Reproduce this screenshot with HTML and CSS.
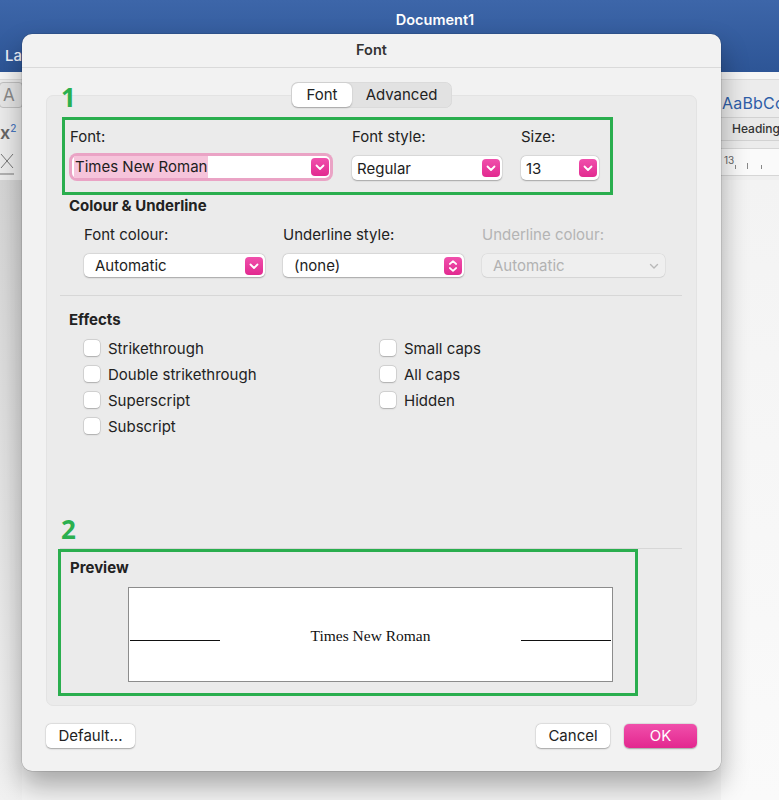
FILE: index.html
```html
<!DOCTYPE html>
<html>
<head>
<meta charset="utf-8">
<title>Font</title>
<link rel="stylesheet" href="styles.css">
</head>
<body>
<div class="word">
  <div class="titlebar">
    <div class="doc-title">Document1</div>
    <div class="tabs-row"><span class="ribbon-tab">La</span></div>
  </div>
  <div class="ribbon">
    <div class="rib-left">
      <div class="rib-btns"><span class="rb rb1"></span><span class="rb rb2">A</span></div>
      <div class="rib-sup">x<sup>2</sup></div>
    </div>
    <div class="rib-right">
      <div class="style-sample">AaBbCc</div>
      <div class="style-name">Heading</div>
    </div>
  </div>
  <div class="ruler-row">
    <div class="ruler-left">
      <svg width="16" height="28" viewBox="0 0 16 28"><path d="M1 4 L13 18 M13 4 L1 18 M0 24 H14" stroke="#777" stroke-width="1" fill="none"/></svg>
    </div>
    <div class="ruler-right"><span class="ruler-num">13</span><span class="tick t1"></span><span class="tick t2"></span><span class="tick t3"></span></div>
  </div>
  <div class="doc-area">
    <div class="doc-left"></div>
    <div class="doc-right"></div>
  </div>
</div>

<div class="dialog">
  <div class="dlg-title">Font</div>
  <div class="dlg-body">
    <div class="panel">
      <div class="tabs">
        <div class="tab sel">Font</div>
        <div class="tab">Advanced</div>
      </div>
      <div class="annot a1">1</div>
      <div class="annot a2">2</div>

      <div class="green box1">
        <div class="font-row">
          <div class="col col-font">
            <div class="lbl">Font:</div>
            <div class="select focus">
              <span class="sel-text"><span class="hl">Times New Roman</span></span>
              <span class="arrow"><svg width="18" height="18" viewBox="0 0 18 18"><polyline points="5.5,7.5 9,11 12.5,7.5" fill="none" stroke="#fff" stroke-width="1.8" stroke-linecap="round" stroke-linejoin="round"/></svg></span>
            </div>
          </div>
          <div class="col col-style">
            <div class="lbl">Font style:</div>
            <div class="select">
              <span class="sel-text">Regular</span>
              <span class="arrow"><svg width="18" height="18" viewBox="0 0 18 18"><polyline points="5.5,7.5 9,11 12.5,7.5" fill="none" stroke="#fff" stroke-width="1.8" stroke-linecap="round" stroke-linejoin="round"/></svg></span>
            </div>
          </div>
          <div class="col col-size">
            <div class="lbl">Size:</div>
            <div class="select">
              <span class="sel-text">13</span>
              <span class="arrow"><svg width="18" height="18" viewBox="0 0 18 18"><polyline points="5.5,7.5 9,11 12.5,7.5" fill="none" stroke="#fff" stroke-width="1.8" stroke-linecap="round" stroke-linejoin="round"/></svg></span>
            </div>
          </div>
        </div>
      </div>

      <div class="sec-title">Colour &amp; Underline</div>
      <div class="cu-row">
        <div class="cu-col">
          <div class="lbl">Font colour:</div>
          <div class="select wide">
            <span class="sel-text">Automatic</span>
            <span class="arrow"><svg width="18" height="18" viewBox="0 0 18 18"><polyline points="5.5,7.5 9,11 12.5,7.5" fill="none" stroke="#fff" stroke-width="1.8" stroke-linecap="round" stroke-linejoin="round"/></svg></span>
          </div>
        </div>
        <div class="cu-col">
          <div class="lbl">Underline style:</div>
          <div class="select wide">
            <span class="sel-text">(none)</span>
            <span class="arrow"><svg width="18" height="18" viewBox="0 0 18 18"><polyline points="5.8,7 9,4.2 12.2,7" fill="none" stroke="#fff" stroke-width="1.7" stroke-linecap="round" stroke-linejoin="round"/><polyline points="5.8,11 9,13.8 12.2,11" fill="none" stroke="#fff" stroke-width="1.7" stroke-linecap="round" stroke-linejoin="round"/></svg></span>
          </div>
        </div>
        <div class="cu-col last">
          <div class="lbl disabled">Underline colour:</div>
          <div class="select wide dis">
            <span class="sel-text">Automatic</span>
            <span class="chev"><svg width="14" height="14" viewBox="0 0 14 14"><polyline points="3.5,5.5 7,9 10.5,5.5" fill="none" stroke="#b8b8b8" stroke-width="1.4" stroke-linecap="round" stroke-linejoin="round"/></svg></span>
          </div>
        </div>
      </div>

      <div class="sep sep1"></div>

      <div class="sec-title effects-title">Effects</div>
      <div class="effects">
        <div class="fx-col">
          <label class="cb"><span class="box"></span>Strikethrough</label>
          <label class="cb"><span class="box"></span>Double strikethrough</label>
          <label class="cb"><span class="box"></span>Superscript</label>
          <label class="cb"><span class="box"></span>Subscript</label>
        </div>
        <div class="fx-col">
          <label class="cb"><span class="box"></span>Small caps</label>
          <label class="cb"><span class="box"></span>All caps</label>
          <label class="cb"><span class="box"></span>Hidden</label>
        </div>
      </div>

      <div class="sep sep2"></div>

      <div class="green box2">
        <div class="sec-title preview-title">Preview</div>
        <div class="preview">
          <span class="pline"></span>
          <span class="ptext">Times New Roman</span>
          <span class="pline"></span>
        </div>
      </div>
    </div>

    <div class="buttons">
      <div class="btn default">Default...</div>
      <div class="btn-group">
        <div class="btn cancel">Cancel</div>
        <div class="btn ok">OK</div>
      </div>
    </div>
  </div>
</div>
</body>
</html>
```

FILE: styles.css
```css
* { box-sizing: border-box; }

html, body {
  margin: 0;
  padding: 0;
}

body {
  width: 779px;
  height: 800px;
  overflow: hidden;
  position: relative;
  font-family: Inter, "Liberation Sans", sans-serif;
  font-size: 15px;
  color: #222;
  background: #f4f4f4;
}

/* ---------- Word background ---------- */
.word {
  height: 800px;
  display: flex;
  flex-direction: column;
}

.titlebar {
  height: 72px;
  background: linear-gradient(#3d66a9, #2d5596);
}

.doc-title {
  height: 40px;
  line-height: 40px;
  padding-left: 91px;
  text-align: center;
  color: #fff;
  font-weight: 600;
  font-size: 14.5px;
}

.tabs-row {
  height: 32px;
  line-height: 32px;
  padding-left: 5px;
}

.ribbon-tab {
  color: #eef2fa;
  font-size: 15px;
  font-weight: 500;
}

.ribbon {
  height: 76px;
  display: flex;
  justify-content: space-between;
  background: linear-gradient(#f6f6f6 0, #f6f6f6 7px, #dcdcdc 7px, #dcdcdc 8px, #ececec 8px);
}

.rib-left {
  width: 22px;
  overflow: hidden;
  padding-top: 10px;
}

.rib-btns {
  display: flex;
  gap: 6px;
  margin-left: -12px;
}

.rb {
  height: 26px;
  border: 1px solid #c2c2c2;
  border-radius: 4px;
  background: #e6e6e6;
  color: #8a8a8a;
  font-size: 17px;
  line-height: 24px;
  padding-left: 3px;
}

.rb1 { width: 15px; }
.rb2 { width: 24px; flex: none; }

.rib-sup {
  margin-top: 10px;
  font-size: 18px;
  font-weight: 600;
  color: #666;
  line-height: 20px;
}

.rib-sup sup {
  font-size: 10px;
  color: #4a78c0;
  font-weight: 500;
}

.rib-right {
  width: 58px;
  padding-top: 21px;
  overflow: hidden;
}

.style-sample {
  font-size: 16px;
  color: #2f5ea8;
  line-height: 20px;
  padding-left: 1px;
  white-space: nowrap;
  letter-spacing: 0.2px;
}

.style-name {
  margin-top: 4px;
  height: 24px;
  line-height: 22px;
  background: #e9e9e9;
  border-top: 1px solid #d2d2d2;
  border-bottom: 1px solid #d2d2d2;
  font-size: 12px;
  font-weight: 500;
  color: #333;
  padding-left: 11px;
  white-space: nowrap;
}

.ruler-row {
  height: 32px;
  display: flex;
  justify-content: space-between;
  background: #efefef;
}

.ruler-left {
  width: 22px;
  padding-top: 2px;
  background: #ececec;
}

.ruler-right {
  width: 58px;
  position: relative;
  background: #fafafa;
  border-top: 1px solid #d6d6d6;
  border-bottom: 1px solid #d6d6d6;
  margin: 0 0 4px;
  font-size: 10px;
  color: #666;
  padding: 5px 0 0 3px;
}

.tick {
  position: absolute;
  bottom: 6px;
  width: 1px;
  height: 4px;
  background: #888;
}
.t1 { left: 14px; }
.t2 { left: 26px; height: 6px; }
.t3 { left: 40px; }

.doc-area {
  flex: 1;
  display: flex;
  justify-content: space-between;
}

.doc-left {
  width: 22px;
  background: linear-gradient(#d6d6d6, #e6e6e6 60%, #f1f1f1);
}

.doc-right {
  width: 58px;
  background: linear-gradient(#f3f3f3, #fafafa);
}

/* ---------- Dialog ---------- */
.dialog {
  position: absolute;
  left: 22px;
  top: 34px;
  width: 699px;
  height: 737px;
  background: #f2f2f2;
  border-radius: 10px;
  box-shadow: 0 14px 28px rgba(0, 0, 0, 0.33), 0 0 0 0.5px rgba(0, 0, 0, 0.18);
}

.dlg-title {
  height: 34px;
  line-height: 32px;
  text-align: center;
  font-weight: 600;
  font-size: 14.5px;
  color: #333;
  border-bottom: 1px solid #dadada;
}

.dlg-body {
  padding: 27px 24px 0;
}

.panel {
  position: relative;
  height: 611px;
  background: #ebebeb;
  border: 1px solid #e3e3e3;
  border-radius: 7px;
}

.tabs {
  display: flex;
  width: 161px;
  height: 26px;
  margin: -14px auto 0;
  padding: 1px;
  background: #e2e2e2;
  border-radius: 7px;
  box-shadow: inset 0 0 0 0.5px rgba(0, 0, 0, 0.06);
}

.tab {
  height: 24px;
  line-height: 24px;
  text-align: center;
  font-size: 15px;
  color: #222;
}

.tab:first-child { width: 60px; }
.tab:last-child { width: 99px; }

.tab.sel {
  background: #fff;
  border-radius: 6px;
  box-shadow: 0 0.5px 1.5px rgba(0, 0, 0, 0.25);
}

.annot {
  position: absolute;
  font-family: "Open Sans", sans-serif;
  font-weight: 700;
  font-size: 26px;
  line-height: 26px;
  color: #2bb04f;
}

.a1 { left: 14px; top: -12px; }
.a2 { left: 14px; top: 420px; }

.green {
  border: 3px solid #2aae4e;
}

.box1 {
  width: 551px;
  height: 78px;
  margin: 9px 0 0 15px;
  padding: 9px 0 0 5px;
}

.font-row {
  display: flex;
}

.col-font { width: 263px; margin-right: 19px; }
.col-style { width: 150px; margin-right: 19px; }
.col-size { width: 78px; }

.lbl {
  font-size: 15px;
  line-height: 16px;
  color: #222;
  margin-bottom: 11px;
  white-space: nowrap;
}

.lbl.disabled { color: #b4b4b4; }

.select {
  display: flex;
  align-items: center;
  justify-content: space-between;
  height: 24px;
  background: #fff;
  border-radius: 5px;
  box-shadow: 0 0.5px 1.5px rgba(0, 0, 0, 0.28), 0 0 0 0.5px rgba(0, 0, 0, 0.06);
  padding: 0 2px 0 5px;
  font-size: 15px;
  color: #1d1d1d;
}

.select.focus {
  width: 258px;
  height: 22px;
  margin-left: 2px;
  padding-left: 2px;
  padding-right: 1px;
  box-shadow: 0 0 0 3px #eaa3c5;
}

.hl {
  display: inline-block;
  background: #f6c4db;
  line-height: 22px;
  padding: 0 1px;
}

.arrow {
  width: 18px;
  height: 18px;
  border-radius: 4px;
  background: linear-gradient(#f050ac, #e22a90);
  display: flex;
}

.sec-title {
  font-weight: 700;
  font-size: 15px;
  line-height: 16px;
  color: #222;
  margin: 3px 0 0 22px;
}

.cu-row {
  display: flex;
  margin: 13px 0 0 37px;
}

.cu-col { width: 181px; margin-right: 18px; }
.cu-col.last { width: 183px; margin-right: 0; }

.select.wide {
  height: 23px;
  padding-left: 11px;
}

.select.dis {
  background: #efefef;
  color: #b2b2b2;
  box-shadow: 0 0 0 0.5px rgba(0, 0, 0, 0.08), 0 0.5px 1px rgba(0, 0, 0, 0.06);
  padding-right: 4px;
}

.chev { display: flex; }

.sep {
  border-top: 1px solid #d7d7d7;
}

.sep1 { margin: 18px 14px 0 13px; }

.effects-title { margin-top: 16px; }

.effects {
  display: flex;
  margin: 7px 0 0 37px;
}

.fx-col:first-child { width: 296px; }

.cb {
  display: flex;
  align-items: center;
  height: 26px;
  font-size: 15px;
  color: #222;
}

.cb .box {
  width: 16px;
  height: 16px;
  background: #fff;
  border-radius: 4px;
  margin-right: 8px;
  box-shadow: 0 0 0 0.5px rgba(0, 0, 0, 0.16), 0 0.5px 1.5px rgba(0, 0, 0, 0.2);
}

.sep2 { margin: 109px 14px 0 13px; }

.box2 {
  width: 580px;
  height: 147px;
  margin-left: 11px;
  padding: 8px 0 0 9px;
}

.preview-title { margin: 0; }

.preview {
  width: 485px;
  height: 95px;
  margin: 11px 0 0 58px;
  background: #fff;
  border: 1px solid #8c8c8c;
  display: flex;
  align-items: baseline;
  justify-content: space-between;
  padding: 40px 1px 0 1px;
}

.pline {
  width: 90px;
  height: 0;
  border-bottom: 1.5px solid #111;
}

.ptext {
  font-family: "Liberation Serif", "Times New Roman", serif;
  font-size: 15.5px;
  line-height: 15px;
  color: #111;
}

.buttons {
  display: flex;
  justify-content: space-between;
  margin-top: 18px;
}

.btn-group {
  display: flex;
  gap: 14px;
}

.btn {
  height: 24px;
  line-height: 24px;
  text-align: center;
  background: #fff;
  border-radius: 5px;
  box-shadow: 0 0.5px 1.5px rgba(0, 0, 0, 0.3), 0 0 0 0.5px rgba(0, 0, 0, 0.06);
  font-size: 15px;
  color: #222;
}

.default { width: 89px; }
.cancel { width: 74px; }

.ok {
  width: 73px;
  color: #fff;
  background: linear-gradient(#f04fab, #e3278f);
}
```
